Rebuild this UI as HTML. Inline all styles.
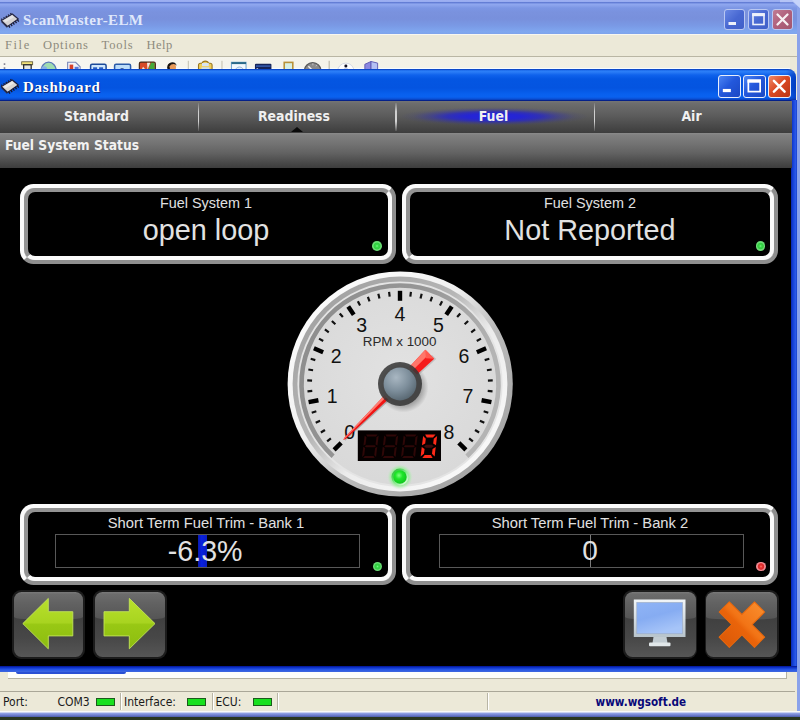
<!DOCTYPE html>
<html><head><meta charset="utf-8"><title>ScanMaster-ELM</title>
<style>
*{margin:0;padding:0;box-sizing:border-box}
html,body{width:800px;height:720px;overflow:hidden;background:#29361f;font-family:"Liberation Sans",sans-serif}
.abs{position:absolute}
#root{position:absolute;left:0;top:0;width:800px;height:720px;overflow:hidden}
.mono{font-family:"Liberation Serif",serif}
.tah{font-family:"DejaVu Sans Condensed","DejaVu Sans","Liberation Sans",sans-serif}
/* outer window */
#otitle{left:0;top:0;width:800px;height:34.5px;background:linear-gradient(#9eb0f2 0,#98acf0 1.8px,#607ad2 2.2px,#6a84da 3px,#90a8f0 4px,#8aa2ec 5.5px,#7c96e4 8px,#7a92de 12px,#7890dc 19px,#7a9ae6 26px,#80a8f0 32px,#7ea2ea 34.5px)}
#otxt{left:23px;top:10.8px;font-size:15px;font-weight:bold;color:#dfe7fb;letter-spacing:0.36px;white-space:nowrap;line-height:18px}
#menubar{left:0;top:34px;width:797px;height:22.5px;background:#ece9d8;border-top:1px solid #f8f7f0}
.mi{top:37.5px;font-size:12.5px;color:#8d8b7d;line-height:14px;white-space:nowrap}
#tbar{left:0;top:56px;width:797px;height:24px;background:linear-gradient(90deg,#f8f7f2 0,#f4f3ea 40%,#efecde 100%);border-top:1px solid #b9b6a4}
#oright{left:797px;top:0;width:3px;height:717px;background:#8aa2ea}
.wb{width:21px;height:21px;border-radius:3px;border:1px solid #c9d5f6}
/* inner window */
#ititle{left:0;top:69px;width:796px;height:32px;border-top-right-radius:8px;background:linear-gradient(#0a3cb8 0,#0d50d4 0.8px,#2a7ef8 1.8px,#2a7cf6 3px,#0f62ec 6px,#0456e2 10px,#0454e0 19px,#0860ee 25px,#0a62f0 28px,#0a4cd0 30.3px,#04218a 31.5px,#021464 32px)}
#itxt{left:23px;top:77.8px;font-size:15px;letter-spacing:0.76px;font-weight:bold;color:#fff;white-space:nowrap;line-height:18px;text-shadow:1px 1px 0 #0a2a80}
#tabs{left:0;top:101px;width:791.5px;height:32px;background:linear-gradient(#747474 0,#6c6c6c 3px,#5d5d5d 14px,#4b4b4b 24px,#3d3d3d 32px)}
.tab{top:101px;height:31px;line-height:30px;text-align:center;color:#f0f0f0;font-weight:bold;font-size:13.9px;white-space:nowrap}
.sep{top:102.5px;width:1.8px;height:28px;background:linear-gradient(rgba(190,190,190,0.15),#cfcfcf 30%,#d4d4d4 65%,rgba(190,190,190,0.15))}
#head{left:0;top:132.5px;width:791.5px;height:35.5px;background:linear-gradient(#8a8a8a 0,#808080 2px,#747474 10px,#626262 20px,#4b4b4b 29px,#3b3b3b 35.5px)}
#htxt{left:5px;top:135px;font-size:13.7px;font-weight:bold;color:#f2f2f2;line-height:20px;white-space:nowrap}
#black{left:0;top:168px;width:791px;height:498.5px;background:#000}
#iright{left:790.5px;top:100px;width:6.5px;height:572px;background:linear-gradient(90deg,#0a28b0 0,#1440d8 2px,#2a58e6 4.5px,#1038c8 6.5px)}
#ibottom{left:0;top:666.3px;width:797px;height:5.4px;background:linear-gradient(#04148c 0,#0c30c8 1.5px,#2656e6 3.6px,#3a64e0 5.4px)}
/* panels */
.panel{width:376px;height:80.25px;border:4.3px solid;border-color:#fbfbfb #8f8f8f #8f8f8f #fbfbfb;border-radius:13.5px;background:#c4c4c4}
.panel b{position:absolute;left:0;top:0;right:0;bottom:0;border:4.3px solid;border-color:#939393 #fbfbfb #fbfbfb #939393;border-radius:11px;background:#000;display:block}
.plabel{color:#e0e0e0;font-size:14.4px;text-align:center;white-space:nowrap;line-height:18px}
.pval{color:#e2e2e2;font-size:28.8px;text-align:center;white-space:nowrap;line-height:34px}
.led{width:9.6px;height:9.6px;border-radius:50%}
.lg{background:radial-gradient(circle at 50% 50%,#78f288 0,#38d848 20%,#30cc40 42%,#6cdc76 54%,#66d870 80%,rgba(80,200,90,0.35) 92%,rgba(60,200,70,0) 100%)}
.lr{background:radial-gradient(circle at 50% 50%,#ff7a68 0,#e63232 20%,#d82a2a 42%,#f08890 54%,#ee8a92 80%,rgba(230,120,130,0.35) 92%,rgba(230,110,120,0) 100%)}
.bar{height:34px;border:1px solid #585858;background:#000}
/* buttons */
.btn{top:590.4px;height:68.8px;border-radius:9px;background:#1c1c1c;}
.btn em{position:absolute;left:1.8px;top:1.8px;right:1.8px;bottom:1.8px;border-radius:7.5px;display:block;background:linear-gradient(#3c3c3c 0,#404040 40%,#474747 70%,#565656 100%);overflow:hidden}
.btn em:before{content:"";position:absolute;left:0;right:0;top:0;height:27.4px;border-radius:7.5px 7.5px 50% 50% / 7.5px 7.5px 3px 3px;background:linear-gradient(#7a7a7a 0,#6c6c6c 8%,#626262 40%,#545454 100%)}
/* status */
#mdi{left:8px;top:671.6px;width:779px;height:7.6px;background:#fdfdfb;border-right:1px solid #b5b2a2;border-bottom:1px solid #b5b2a2}
#cream{left:0;top:671.6px;width:797px;height:40.6px;background:#ece9d8}
#sline{left:0;top:690.6px;width:795px;height:1.2px;background:#aaa798}
#obottom{left:0;top:711px;width:800px;height:6px;background:linear-gradient(#fbfbf8 0,#f6f6f4 1.3px,#9cacec 1.7px,#8494dc 3px,#6676c6 4.6px,#4c5ca6 6px)}
.st{top:695px;font-size:12px;color:#1a1a1a;line-height:15px;white-space:nowrap}
.gl{top:697.5px;width:19px;height:8.8px;background:#19e01f;border:1px solid #1c5a1c}
.ssep{top:693px;width:2px;height:17px;border-left:1px solid #b8b5a5;border-right:1px solid #fff}
</style></head><body><div id="root">
<!-- outer window -->
<div class="abs" id="otitle"></div>
<div class="abs" id="menubar"></div>
<div class="abs" id="tbar"></div>
<div class="abs" id="oright"></div>
<div class="abs" style="left:0;top:67.6px;width:795px;height:1.6px;background:#f6fbff"></div>
<svg class="abs" style="left:780px;top:0" width="20" height="12" viewBox="0 0 20 12"><polygon points="0,0 20,0 20,8 13,2.200 0,2.200" fill="#b4c4f6"/><polygon points="12,0 20,0 20,8" fill="#c6d4fa"/></svg>
<div class="abs mono" id="otxt">ScanMaster-ELM</div>
<div class="abs mono mi" style="left:5px;letter-spacing:1.6px">File</div>
<div class="abs mono mi" style="left:43px;letter-spacing:0.9px">Options</div>
<div class="abs mono mi" style="left:101.5px;letter-spacing:0.9px">Tools</div>
<div class="abs mono mi" style="left:146.5px;letter-spacing:0.5px">Help</div>
<svg class="abs" style="left:0;top:57px" width="400" height="12.2" viewBox="0 56.2 400 12.2">
<g>
<rect x="3.5" y="62.5" width="1.6" height="1.6" fill="#7a7a8a"/><rect x="3.5" y="66.5" width="1.6" height="1.6" fill="#7a7a8a"/>
<!-- 1 bin -->
<rect x="21.5" y="61" width="11" height="3" fill="#f3e27a" stroke="#5a5230" stroke-width="0.8"/><rect x="23.5" y="64" width="7.5" height="6" fill="#e8e8e0" stroke="#222" stroke-width="1.2"/>
<!-- 2 globe -->
<ellipse cx="48.5" cy="70" rx="7.6" ry="8.6" fill="#9fdcb0" stroke="#5a78b8" stroke-width="1.3"/><ellipse cx="44" cy="68.5" rx="3" ry="3" fill="#86aee6"/>
<!-- 3 doc -->
<path d="M67.5 61.5h8l4.5 4.5v5h-12.5z" fill="#f4f4fa" stroke="#7a86b8" stroke-width="1.1"/><rect x="69.5" y="63.8" width="3.6" height="6" fill="#d8402a"/><rect x="74.5" y="66" width="4" height="4" fill="#5a78d8"/>
<!-- 4 window -->
<rect x="90.5" y="63.5" width="15.5" height="8" rx="1.5" fill="#cfe6fb" stroke="#1c4a9a" stroke-width="1.5"/><rect x="93" y="66.5" width="4" height="3" fill="#2a5ec0"/><rect x="99" y="66.5" width="4" height="3" fill="#2a5ec0"/>
<!-- 5 window -->
<rect x="114.5" y="63.5" width="16" height="8" rx="1.5" fill="#bcdcf8" stroke="#2a5aa8" stroke-width="1.5"/><rect x="120.5" y="67.5" width="3" height="2" fill="#1c3a80"/>
<!-- 6 flag -->
<rect x="139.3" y="61.3" width="16" height="10" rx="1.6" fill="#d84a28" stroke="#4a2a18" stroke-width="1.2"/><polygon points="148,70 151,62 154.6,62 154.6,70" fill="#46a83a"/><polygon points="143,66 146.5,70 141,70" fill="#f2e8d8"/><polygon points="147,62 150.2,62 147.4,69" fill="#f0ece0"/>
<!-- 7 person -->
<ellipse cx="172" cy="66.3" rx="4" ry="4.2" fill="#e89a5a"/><path d="M167.2 67.5a5 5.4 0 0 1 9.6-2.6a4 3 0 0 0-5.6-1.2a4 5 0 0 0-2 5.8z" fill="#1a1410"/><rect x="167.6" y="66.5" width="2.2" height="4" fill="#1a1410"/>
<line x1="188.3" y1="60" x2="188.3" y2="70" stroke="#c2bfae" stroke-width="1"/>
<!-- 8 clipboard/printer -->
<path d="M198.5 70v-5.5q0-2 2-2h1.5q0.6-2.2 3.3-2.2t3.3 2.2h1.5q2 0 2 2v5.500z" fill="#f0cf5a" stroke="#9a7820" stroke-width="1.1"/><rect x="202" y="62.2" width="6.8" height="3.2" fill="#d8e4f0"/><rect x="201.5" y="66.5" width="8" height="4" fill="#cfe0ee"/>
<line x1="222" y1="60" x2="222" y2="70" stroke="#c2bfae" stroke-width="1"/>
<!-- 9 window -->
<rect x="231.5" y="61.5" width="14.6" height="10" fill="#f2f8fc" stroke="#7aaad0" stroke-width="1.1"/><rect x="231.5" y="61.3" width="14.6" height="2" fill="#2a6a8a"/><circle cx="239.5" cy="70.5" r="4.3" fill="#e4eef6" stroke="#9ab8d8" stroke-width="1"/>
<!-- 10 dark rect -->
<rect x="255" y="63" width="16.5" height="8" rx="1" fill="#16245a"/><rect x="256" y="64.6" width="14.5" height="1.4" fill="#3a62b8"/><rect x="256.6" y="67.6" width="1.6" height="1.6" fill="#fff"/>
<!-- 11 doc -->
<rect x="284.3" y="61.6" width="8.6" height="10" fill="#d8f0e4" stroke="#b8923a" stroke-width="1.6"/>
<!-- 12 gauge -->
<circle cx="312.8" cy="70" r="8.2" fill="#8a8a8a" stroke="#5a5a5a" stroke-width="1.2"/><path d="M308.5 65.5l4 4" stroke="#f0f0f0" stroke-width="1.4"/><path d="M313 62.5v2M317 64l-1 1.5" stroke="#d0d0d0" stroke-width="0.8"/>
<line x1="329.3" y1="60" x2="329.3" y2="70" stroke="#b0ad9e" stroke-width="1"/>
<!-- 13 info -->
<circle cx="346" cy="70.5" r="8.2" fill="#fdfdfd" stroke="#d4d8e2" stroke-width="1"/><circle cx="346" cy="65.2" r="1.5" fill="#141428"/><rect x="344" y="68" width="4" height="3" fill="#2a4ab0"/>
<!-- 14 book -->
<path d="M365 71v-7.500l6.200-2.800v10.300z" fill="#8a86e0" stroke="#5a56b0" stroke-width="0.9"/><path d="M371.200 60.700l6.600 1.600v8.700h-6.600z" fill="#b4c0f4" stroke="#5a56b0" stroke-width="0.9"/>
</g></svg>
<svg class="abs" style="left:0px;top:12px;opacity:0.95" width="20" height="17" viewBox="0 0 20 17">
<polygon points="1.3,8.600 12.300,2 18.300,7 7.600,14.400" fill="#dad6d2" stroke="#1e1e3a" stroke-width="1.1" stroke-linejoin="round"/>
<polygon points="3.500,8.500 12,3.500 14,5.200 5.500,10.300" fill="#eceae8"/>
<line x1="18.600" y1="8.300" x2="8" y2="15.600" stroke="#15152c" stroke-width="2.300" stroke-dasharray="1.300 1.350"/>
<line x1="1.200" y1="7.500" x2="12" y2="1" stroke="#1c1c34" stroke-width="1.300" stroke-dasharray="1.300 1.350"/>
<line x1="1.600" y1="9.600" x2="7.400" y2="15.300" stroke="#2a2a40" stroke-width="1.400"/>
</svg>
<div class="abs wb" style="left:723.5px;top:9px;width:21px;height:21px;background:linear-gradient(135deg,#6a88e4 0,#4868d2 50%,#4060c8 100%);border-color:#b9c7f2"><svg width="21" height="21" viewBox="0 0 21 21" style="position:absolute;left:-1px;top:-1px;opacity:0.9"><rect x="4.5" y="13" width="7.5" height="3" fill="#fff"/></svg></div><div class="abs wb" style="left:747.7px;top:9px;width:21px;height:21px;background:linear-gradient(135deg,#6a88e4 0,#4868d2 50%,#4060c8 100%);border-color:#b9c7f2"><svg width="21" height="21" viewBox="0 0 21 21" style="position:absolute;left:-1px;top:-1px;opacity:0.9"><rect x="5" y="5" width="11" height="10.5" fill="none" stroke="#fff" stroke-width="1.6"/><rect x="4.2" y="4.2" width="12.6" height="3" fill="#fff"/></svg></div><div class="abs wb" style="left:771.9px;top:9px;width:21px;height:21px;background:linear-gradient(135deg,#c07c94 0,#b0607c 50%,#a2566e 100%);border-color:#b9c7f2"><svg width="21" height="21" viewBox="0 0 21 21" style="position:absolute;left:-1px;top:-1px;opacity:0.9"><path d="M5.5 5.5 L15.5 15.5 M15.5 5.5 L5.5 15.5" stroke="#fff" stroke-width="2.3" stroke-linecap="round"/></svg></div>
<!-- cream bottom -->
<div class="abs" id="cream"></div>
<div class="abs" id="mdi"></div>
<div class="abs" style="left:16px;top:671.6px;width:110px;height:2.6px;background:#2a50d4;border-radius:0 0 3px 3px"></div>
<div class="abs" id="sline"></div>
<div class="abs" id="obottom"></div>
<div class="abs tah st" style="left:3px">Port:</div>
<div class="abs tah st" style="left:57.5px">COM3</div>
<div class="abs gl" style="left:95.5px"></div>
<div class="abs ssep" style="left:119.5px"></div>
<div class="abs tah st" style="left:124px">Interface:</div>
<div class="abs gl" style="left:187px"></div>
<div class="abs ssep" style="left:211.5px"></div>
<div class="abs tah st" style="left:215.5px">ECU:</div>
<div class="abs gl" style="left:252.5px"></div>
<div class="abs ssep" style="left:276.5px"></div>
<div class="abs ssep" style="left:486.5px"></div>
<div class="abs tah st" style="left:595.5px;font-weight:bold;color:#080878;font-size:11.6px">www.wgsoft.de</div>
<!-- inner window -->
<div class="abs" style="left:790px;top:57px;width:7px;height:620px;background:#ece9d8"></div>
<div class="abs" id="ititle"></div>
<div class="abs" style="left:786px;top:69px;width:10px;height:32px;border-top-right-radius:8px;background:linear-gradient(90deg,rgba(0,30,150,0),rgba(0,30,150,0.45))"></div>
<div class="abs mono" id="itxt">Dashboard</div>
<svg class="abs" style="left:0px;top:78px;opacity:1" width="20" height="17" viewBox="0 0 20 17">
<polygon points="1.3,8.600 12.300,2 18.300,7 7.600,14.400" fill="#dad6d2" stroke="#1e1e3a" stroke-width="1.1" stroke-linejoin="round"/>
<polygon points="3.500,8.500 12,3.500 14,5.200 5.500,10.300" fill="#eceae8"/>
<line x1="18.600" y1="8.300" x2="8" y2="15.600" stroke="#15152c" stroke-width="2.300" stroke-dasharray="1.300 1.350"/>
<line x1="1.200" y1="7.500" x2="12" y2="1" stroke="#1c1c34" stroke-width="1.300" stroke-dasharray="1.300 1.350"/>
<line x1="1.600" y1="9.600" x2="7.400" y2="15.300" stroke="#2a2a40" stroke-width="1.400"/>
</svg>
<div class="abs wb" style="left:718.2px;top:75.1px;width:22.5px;height:22.5px;background:linear-gradient(135deg,#4d86f4 0,#2358dc 45%,#1b48c4 100%);border-color:#e8eefc"><svg width="22.5" height="22.5" viewBox="0 0 21 21" style="position:absolute;left:-1px;top:-1px;opacity:1"><rect x="4.5" y="13" width="7.5" height="3" fill="#fff"/></svg></div><div class="abs wb" style="left:743.1px;top:75.1px;width:22.5px;height:22.5px;background:linear-gradient(135deg,#4d86f4 0,#2358dc 45%,#1b48c4 100%);border-color:#e8eefc"><svg width="22.5" height="22.5" viewBox="0 0 21 21" style="position:absolute;left:-1px;top:-1px;opacity:1"><rect x="5" y="5" width="11" height="10.5" fill="none" stroke="#fff" stroke-width="1.6"/><rect x="4.2" y="4.2" width="12.6" height="3" fill="#fff"/></svg></div><div class="abs wb" style="left:768.0px;top:75.1px;width:22.5px;height:22.5px;background:linear-gradient(135deg,#f08a68 0,#dc4a24 45%,#b93414 100%);border-color:#e8eefc"><svg width="22.5" height="22.5" viewBox="0 0 21 21" style="position:absolute;left:-1px;top:-1px;opacity:1"><path d="M5.5 5.5 L15.5 15.5 M15.5 5.5 L5.5 15.5" stroke="#fff" stroke-width="2.3" stroke-linecap="round"/></svg></div>
<div class="abs" id="iright"></div>
<div class="abs" id="tabs"></div>
<div class="abs" style="left:400px;top:106.5px;width:188px;height:19px;border-radius:50%;background:radial-gradient(closest-side,#2424de 0,#2525d2 30%,rgba(38,38,200,0.8) 50%,rgba(46,46,176,0.45) 68%,rgba(60,60,140,0.15) 86%,rgba(70,70,110,0) 100%)"></div>
<div class="abs tah tab" style="left:0;width:193px">Standard</div>
<div class="abs tah tab" style="left:198px;width:192px">Readiness</div>
<div class="abs tah tab" style="left:396px;width:195px">Fuel</div>
<div class="abs tah tab" style="left:594px;width:195px">Air</div>
<div class="abs sep" style="left:197.5px"></div>
<div class="abs sep" style="left:395.3px"></div>
<div class="abs sep" style="left:593.5px"></div>
<div class="abs" id="head"></div>
<div class="abs" style="left:290.5px;top:127.4px;width:0;height:0;border-left:6px solid transparent;border-right:6px solid transparent;border-bottom:5.2px solid #0a0a0a"></div>
<div class="abs tah" id="htxt">Fuel System Status</div>
<div class="abs" id="black"></div>
<div class="abs" id="ibottom"></div>
<!-- panels -->
<div class="abs panel" style="left:19.5px;top:184px"><b></b></div>
<div class="abs panel" style="left:402.25px;top:184px"><b></b></div>
<div class="abs panel" style="left:19.5px;top:504.25px"><b></b></div>
<div class="abs panel" style="left:402.25px;top:504.25px"><b></b></div>
<div class="abs plabel" style="left:106px;top:194px;width:200px">Fuel System 1</div>
<div class="abs pval" style="left:56px;top:212.7px;width:300px">open loop</div>
<div class="abs plabel" style="left:490px;top:194px;width:200px">Fuel System 2</div>
<div class="abs pval" style="left:440px;top:212.7px;width:300px">Not Reported</div>
<div class="abs led lg" style="left:372px;top:241.4px"></div>
<div class="abs led lg" style="left:755.7px;top:241px"></div>
<div class="abs plabel" style="left:56px;top:514px;width:300px;font-size:14.75px">Short Term Fuel Trim - Bank 1</div>
<div class="abs plabel" style="left:440px;top:514px;width:300px;font-size:14.75px">Short Term Fuel Trim - Bank 2</div>
<div class="abs bar" style="left:54.5px;top:533.5px;width:305px"></div>
<div class="abs bar" style="left:438.5px;top:533.5px;width:305px"></div>
<div class="abs" style="left:197.5px;top:534.5px;width:9.2px;height:32px;background:linear-gradient(90deg,#0a1ab0,#0820e0 40%,#0a1cc0)"></div>
<div class="abs" style="left:589.6px;top:534.5px;width:1px;height:32px;background:#7a7a7a"></div>
<div class="abs pval" style="left:55.2px;top:534px;width:300px;font-size:28.6px">-6.3%</div>
<div class="abs pval" style="left:440px;top:534px;width:300px;font-size:28px">0</div>
<div class="abs led lg" style="left:372.7px;top:561.7px"></div>
<div class="abs led lr" style="left:756px;top:561.7px"></div>

<svg class="abs" style="left:0;top:0" width="800" height="720" viewBox="0 0 800 720" font-family="'Liberation Sans', sans-serif">
<defs>
<linearGradient id="bz1" x1="0.15" y1="0.15" x2="0.85" y2="0.85"><stop offset="0" stop-color="#fbfbfb"/><stop offset="0.38" stop-color="#f0f0f0"/><stop offset="0.62" stop-color="#bcbcbc"/><stop offset="1" stop-color="#a6a6a6"/></linearGradient>
<linearGradient id="bz2" x1="0.15" y1="0.15" x2="0.85" y2="0.85"><stop offset="0" stop-color="#a4a4a4"/><stop offset="0.38" stop-color="#b6b6b6"/><stop offset="0.62" stop-color="#ececec"/><stop offset="1" stop-color="#f8f8f8"/></linearGradient>
<linearGradient id="darc" x1="0" y1="0" x2="1" y2="0.3"><stop offset="0" stop-color="#8c8c8c"/><stop offset="0.6" stop-color="#979797"/><stop offset="1" stop-color="#b4b4b4"/></linearGradient>
<radialGradient id="face" cx="0.5" cy="0.45" r="0.6"><stop offset="0" stop-color="#e2e2e2"/><stop offset="1" stop-color="#d8d8d8"/></radialGradient>
<radialGradient id="ball" cx="0.38" cy="0.3" r="0.75"><stop offset="0" stop-color="#a9b7c2"/><stop offset="0.55" stop-color="#7d8e9b"/><stop offset="1" stop-color="#56656f"/></radialGradient>
<radialGradient id="led" cx="0.42" cy="0.38" r="0.6"><stop offset="0" stop-color="#7dff7d"/><stop offset="0.45" stop-color="#1fe62a"/><stop offset="1" stop-color="#12c81e"/></radialGradient>
<linearGradient id="ledring" x1="0.15" y1="0.15" x2="0.85" y2="0.85"><stop offset="0" stop-color="#34c440"/><stop offset="0.5" stop-color="#7ee886"/><stop offset="1" stop-color="#d2fad2"/></linearGradient>
<radialGradient id="glow" cx="0.5" cy="0.5" r="0.5"><stop offset="0.6" stop-color="#80f080" stop-opacity="0.9"/><stop offset="0.8" stop-color="#a4eca4" stop-opacity="0.5"/><stop offset="1" stop-color="#d0e8d0" stop-opacity="0"/></radialGradient>
<radialGradient id="hubsh" cx="0.5" cy="0.5" r="0.5"><stop offset="0.7" stop-color="#000" stop-opacity="0.28"/><stop offset="1" stop-color="#000" stop-opacity="0"/></radialGradient>
</defs>
<circle cx="400.2" cy="384" r="112.6" fill="url(#bz1)"/>
<circle cx="400" cy="384" r="107.4" fill="url(#bz2)"/>
<circle cx="400" cy="384" r="102.6" fill="#e4e4e4"/>
<circle cx="400" cy="384" r="100.6" fill="url(#face)"/>
<path d="M333.08 456.27 A98.5 98.5 0 1 1 466.92 456.27" fill="none" stroke="url(#darc)" stroke-width="4.6"/>
<line x1="341.17" y1="442.83" x2="334.10" y2="449.90" stroke="#000" stroke-width="4.4"/>
<line x1="330.89" y1="438.48" x2="327.12" y2="441.45" stroke="#111" stroke-width="2.2"/>
<line x1="324.97" y1="429.98" x2="320.87" y2="432.49" stroke="#111" stroke-width="2.2"/>
<line x1="320.08" y1="420.84" x2="315.72" y2="422.85" stroke="#111" stroke-width="2.2"/>
<line x1="316.31" y1="411.19" x2="311.74" y2="412.68" stroke="#111" stroke-width="2.2"/>
<line x1="318.40" y1="400.23" x2="308.59" y2="402.18" stroke="#000" stroke-width="4.4"/>
<line x1="312.27" y1="390.90" x2="307.49" y2="391.28" stroke="#111" stroke-width="2.2"/>
<line x1="312.07" y1="380.55" x2="307.27" y2="380.36" stroke="#111" stroke-width="2.2"/>
<line x1="313.08" y1="370.23" x2="308.34" y2="369.48" stroke="#111" stroke-width="2.2"/>
<line x1="315.30" y1="360.11" x2="310.68" y2="358.81" stroke="#111" stroke-width="2.2"/>
<line x1="323.13" y1="352.16" x2="313.89" y2="348.33" stroke="#000" stroke-width="4.4"/>
<line x1="323.22" y1="341.00" x2="319.03" y2="338.66" stroke="#111" stroke-width="2.2"/>
<line x1="328.81" y1="332.27" x2="324.92" y2="329.45" stroke="#111" stroke-width="2.2"/>
<line x1="335.38" y1="324.27" x2="331.85" y2="321.01" stroke="#111" stroke-width="2.2"/>
<line x1="342.85" y1="317.08" x2="339.73" y2="313.43" stroke="#111" stroke-width="2.2"/>
<line x1="353.78" y1="314.82" x2="348.22" y2="306.51" stroke="#000" stroke-width="4.4"/>
<line x1="360.05" y1="305.59" x2="357.87" y2="301.31" stroke="#111" stroke-width="2.2"/>
<line x1="369.54" y1="301.44" x2="367.88" y2="296.94" stroke="#111" stroke-width="2.2"/>
<line x1="379.46" y1="298.43" x2="378.34" y2="293.76" stroke="#111" stroke-width="2.2"/>
<line x1="389.66" y1="296.61" x2="389.09" y2="291.84" stroke="#111" stroke-width="2.2"/>
<line x1="400.00" y1="300.80" x2="400.00" y2="290.80" stroke="#000" stroke-width="4.4"/>
<line x1="410.34" y1="296.61" x2="410.91" y2="291.84" stroke="#111" stroke-width="2.2"/>
<line x1="420.54" y1="298.43" x2="421.66" y2="293.76" stroke="#111" stroke-width="2.2"/>
<line x1="430.46" y1="301.44" x2="432.12" y2="296.94" stroke="#111" stroke-width="2.2"/>
<line x1="439.95" y1="305.59" x2="442.13" y2="301.31" stroke="#111" stroke-width="2.2"/>
<line x1="446.22" y1="314.82" x2="451.78" y2="306.51" stroke="#000" stroke-width="4.4"/>
<line x1="457.15" y1="317.08" x2="460.27" y2="313.43" stroke="#111" stroke-width="2.2"/>
<line x1="464.62" y1="324.27" x2="468.15" y2="321.01" stroke="#111" stroke-width="2.2"/>
<line x1="471.19" y1="332.27" x2="475.08" y2="329.45" stroke="#111" stroke-width="2.2"/>
<line x1="476.78" y1="341.00" x2="480.97" y2="338.66" stroke="#111" stroke-width="2.2"/>
<line x1="476.87" y1="352.16" x2="486.11" y2="348.33" stroke="#000" stroke-width="4.4"/>
<line x1="484.70" y1="360.11" x2="489.32" y2="358.81" stroke="#111" stroke-width="2.2"/>
<line x1="486.92" y1="370.23" x2="491.66" y2="369.48" stroke="#111" stroke-width="2.2"/>
<line x1="487.93" y1="380.55" x2="492.73" y2="380.36" stroke="#111" stroke-width="2.2"/>
<line x1="487.73" y1="390.90" x2="492.51" y2="391.28" stroke="#111" stroke-width="2.2"/>
<line x1="481.60" y1="400.23" x2="491.41" y2="402.18" stroke="#000" stroke-width="4.4"/>
<line x1="483.69" y1="411.19" x2="488.26" y2="412.68" stroke="#111" stroke-width="2.2"/>
<line x1="479.92" y1="420.84" x2="484.28" y2="422.85" stroke="#111" stroke-width="2.2"/>
<line x1="475.03" y1="429.98" x2="479.13" y2="432.49" stroke="#111" stroke-width="2.2"/>
<line x1="469.11" y1="438.48" x2="472.88" y2="441.45" stroke="#111" stroke-width="2.2"/>
<line x1="458.83" y1="442.83" x2="465.90" y2="449.90" stroke="#000" stroke-width="4.4"/>
<text x="349.7" y="438.8" text-anchor="middle" font-size="19.5" fill="#111">0</text>
<text x="332.1" y="403.4" text-anchor="middle" font-size="19.5" fill="#111">1</text>
<text x="336.1" y="363.4" text-anchor="middle" font-size="19.5" fill="#111">2</text>
<text x="361.6" y="332.4" text-anchor="middle" font-size="19.5" fill="#111">3</text>
<text x="400.0" y="320.7" text-anchor="middle" font-size="19.5" fill="#111">4</text>
<text x="438.4" y="332.4" text-anchor="middle" font-size="19.5" fill="#111">5</text>
<text x="463.9" y="363.4" text-anchor="middle" font-size="19.5" fill="#111">6</text>
<text x="467.9" y="403.4" text-anchor="middle" font-size="19.5" fill="#111">7</text>
<text x="448.9" y="438.8" text-anchor="middle" font-size="19.5" fill="#111">8</text>
<text x="399.6" y="346.4" text-anchor="middle" font-size="13.4" fill="#2a2a2a">RPM x 1000</text>
<rect x="357.8" y="430.4" width="83.2" height="30.6" fill="#050000"/>
<g transform="translate(364.8,434.5) skewX(-7)"><polygon points="1.20,0.00 12.80,0.00 11.40,2.00 2.60,2.00" fill="#2e0707"/><polygon points="14.00,1.00 14.00,11.10 12.00,9.90 12.00,2.80" fill="#2e0707"/><polygon points="14.00,12.30 14.00,22.40 12.00,20.60 12.00,13.50" fill="#2e0707"/><polygon points="1.20,23.40 12.80,23.40 11.40,21.40 2.60,21.40" fill="#2e0707"/><polygon points="0.00,12.30 0.00,22.40 2.00,20.60 2.00,13.50" fill="#2e0707"/><polygon points="0.00,1.00 0.00,11.10 2.00,9.90 2.00,2.80" fill="#2e0707"/><polygon points="1.40,11.70 2.80,10.70 11.20,10.70 12.60,11.70 11.20,12.70 2.80,12.70" fill="#2e0707"/></g><g transform="translate(384.3,434.5) skewX(-7)"><polygon points="1.20,0.00 12.80,0.00 11.40,2.00 2.60,2.00" fill="#2e0707"/><polygon points="14.00,1.00 14.00,11.10 12.00,9.90 12.00,2.80" fill="#2e0707"/><polygon points="14.00,12.30 14.00,22.40 12.00,20.60 12.00,13.50" fill="#2e0707"/><polygon points="1.20,23.40 12.80,23.40 11.40,21.40 2.60,21.40" fill="#2e0707"/><polygon points="0.00,12.30 0.00,22.40 2.00,20.60 2.00,13.50" fill="#2e0707"/><polygon points="0.00,1.00 0.00,11.10 2.00,9.90 2.00,2.80" fill="#2e0707"/><polygon points="1.40,11.70 2.80,10.70 11.20,10.70 12.60,11.70 11.20,12.70 2.80,12.70" fill="#2e0707"/></g><g transform="translate(403.8,434.5) skewX(-7)"><polygon points="1.20,0.00 12.80,0.00 11.40,2.00 2.60,2.00" fill="#2e0707"/><polygon points="14.00,1.00 14.00,11.10 12.00,9.90 12.00,2.80" fill="#2e0707"/><polygon points="14.00,12.30 14.00,22.40 12.00,20.60 12.00,13.50" fill="#2e0707"/><polygon points="1.20,23.40 12.80,23.40 11.40,21.40 2.60,21.40" fill="#2e0707"/><polygon points="0.00,12.30 0.00,22.40 2.00,20.60 2.00,13.50" fill="#2e0707"/><polygon points="0.00,1.00 0.00,11.10 2.00,9.90 2.00,2.80" fill="#2e0707"/><polygon points="1.40,11.70 2.80,10.70 11.20,10.70 12.60,11.70 11.20,12.70 2.80,12.70" fill="#2e0707"/></g><g transform="translate(423.3,434.5) skewX(-7)"><polygon points="1.80,0.00 12.20,0.00 10.10,3.00 3.90,3.00" fill="#ff2a18"/><polygon points="14.00,1.50 14.00,10.80 11.00,9.00 11.00,4.20" fill="#ff2a18"/><polygon points="14.00,12.60 14.00,21.90 11.00,19.20 11.00,14.40" fill="#ff2a18"/><polygon points="1.80,23.40 12.20,23.40 10.10,20.40 3.90,20.40" fill="#ff2a18"/><polygon points="0.00,12.60 0.00,21.90 3.00,19.20 3.00,14.40" fill="#ff2a18"/><polygon points="0.00,1.50 0.00,10.80 3.00,9.00 3.00,4.20" fill="#ff2a18"/><polygon points="2.10,11.70 4.20,10.20 9.80,10.20 11.90,11.70 9.80,13.20 4.20,13.20" fill="#3c0c0c"/></g>
<circle cx="400" cy="477" r="13" fill="url(#glow)"/>
<circle cx="400" cy="477" r="8.500" fill="url(#ledring)"/>
<circle cx="400" cy="477" r="6.700" fill="url(#led)"/>
<circle cx="403.5" cy="387.5" r="25" fill="url(#hubsh)"/>
<g transform="translate(400.4,383.4) rotate(-44.8)">
<polygon points="-80,1.800 -20,4.400 -20,1 -78,0.500" fill="#000" fill-opacity="0.22"/>
<polygon points="18,7 42.600,8 42.600,2 18,2" fill="#000" fill-opacity="0.12"/>
<polygon points="-80.500,0 -78,-1 -20,-2.700 -20,2.700 -78,1" fill="#f01414"/>
<polygon points="-80.500,0 -78,-1 -20,-2.700 -20,-0.300" fill="#ff7d72"/>
<polygon points="18,-5.400 41.400,-6.300 41.400,6.300 18,5.400" fill="#f61c1c"/>
<polygon points="18,-5.400 41.400,-6.300 41.400,-0.500 18,-0.500" fill="#ff766a"/>
<polygon points="41.400,-6.300 41.400,6.300 35.800,0" fill="#ff5a50"/>
</g>
<circle cx="400" cy="384" r="22" fill="#363636" fill-opacity="0.86"/>
<circle cx="400" cy="384" r="16.4" fill="url(#ball)"/>
</svg>

<!-- buttons -->
<div class="abs btn" style="left:12px;width:72.6px"><em></em></div>
<div class="abs btn" style="left:93px;width:74.2px"><em></em></div>
<div class="abs btn" style="left:623px;width:74.4px"><em></em></div>
<div class="abs btn" style="left:704.6px;width:74.4px"><em></em></div>
<svg class="abs" style="left:0;top:585px" width="800" height="80" viewBox="0 585 800 80">
<defs>
<linearGradient id="lime" x1="0" y1="0" x2="0" y2="1"><stop offset="0" stop-color="#b9e02c"/><stop offset="0.48" stop-color="#a8d420"/><stop offset="0.52" stop-color="#98c814"/><stop offset="1" stop-color="#8cbc10"/></linearGradient>
<linearGradient id="org" x1="0" y1="0" x2="0" y2="1"><stop offset="0" stop-color="#f88a2a"/><stop offset="0.45" stop-color="#f27416"/><stop offset="0.55" stop-color="#ea640a"/><stop offset="1" stop-color="#dc5a08"/></linearGradient>
<linearGradient id="scr" x1="0" y1="0" x2="0.4" y2="1"><stop offset="0" stop-color="#8fb4f6"/><stop offset="0.5" stop-color="#86acf2"/><stop offset="1" stop-color="#a6c4f8"/></linearGradient>
<linearGradient id="frm" x1="0" y1="0" x2="0" y2="1"><stop offset="0" stop-color="#f2f6f8"/><stop offset="1" stop-color="#b8c4cc"/></linearGradient>
</defs>
<polygon points="22.800,623.600 48.300,598.400 48.300,611.700 72.800,611.700 72.800,635.900 48.300,635.900 48.300,648.800" fill="url(#lime)" stroke="#c2e458" stroke-width="0.9" stroke-linejoin="round"/>
<polygon points="155,623.600 129.300,598.400 129.300,611.700 104,611.700 104,635.900 129.300,635.900 129.300,648.800" fill="url(#lime)" stroke="#c2e458" stroke-width="0.9" stroke-linejoin="round"/>
<rect x="633.800" y="599.500" width="51.700" height="37.500" fill="url(#frm)"/>
<rect x="636.800" y="602.500" width="45.700" height="31.300" fill="url(#scr)" stroke="#9aa8c0" stroke-width="0.6"/>
<polygon points="653.500,637 666.500,637 667.500,643 652.500,643" fill="#c2ccd2"/>
<rect x="649" y="642.600" width="21.500" height="3.600" rx="1" fill="#e2e8ea"/>
<g transform="translate(741.900,624.600) rotate(45)"><path d="M-7.200,-25h14.400v17.800h17.800v14.400h-17.800v17.800h-14.400v-17.800h-17.800v-14.400h17.800z" fill="url(#org)" stroke="#e8680c" stroke-width="1" stroke-linejoin="round"/></g>
</svg>
</div></body></html>
